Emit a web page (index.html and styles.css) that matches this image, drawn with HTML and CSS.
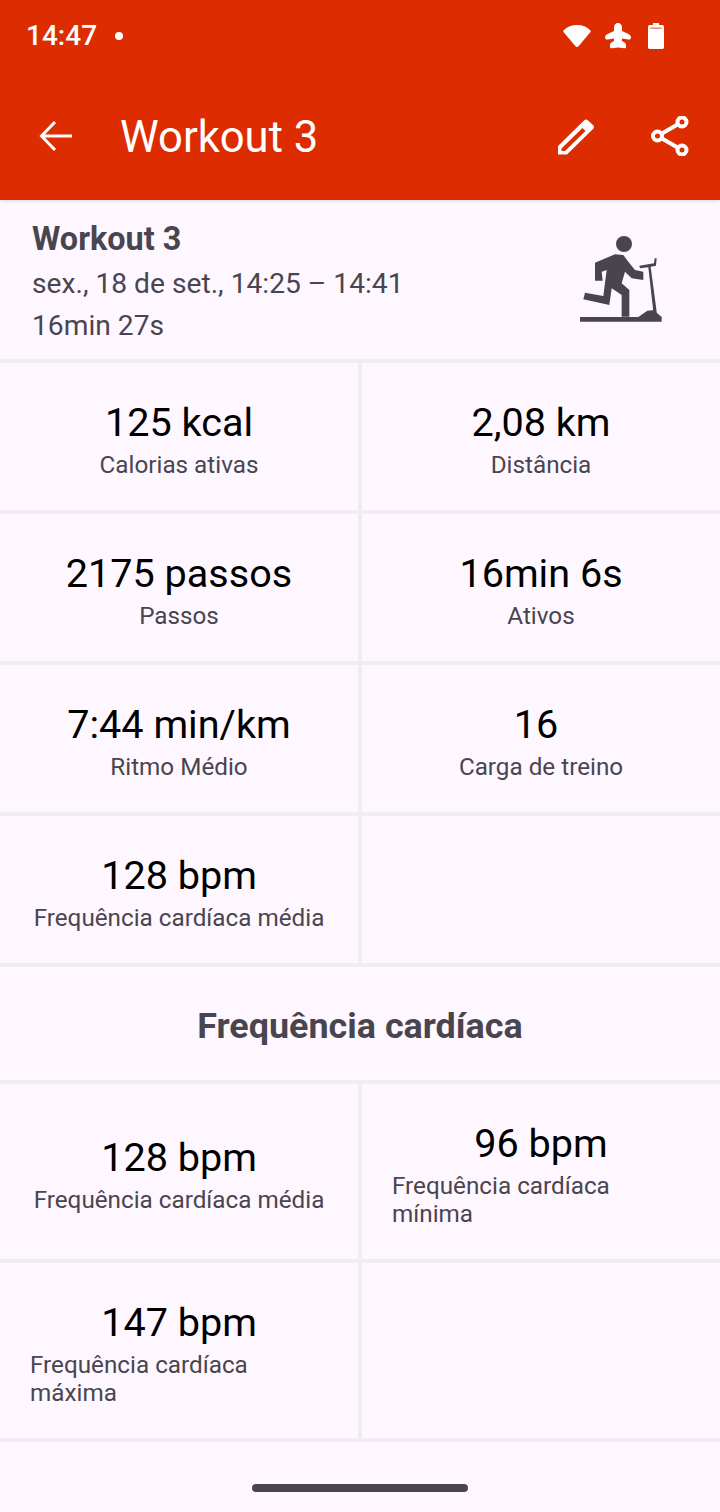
FILE: index.html
```html
<!DOCTYPE html>
<html lang="pt">
<head>
<meta charset="utf-8">
<title>Workout 3</title>
<link rel="stylesheet" href="styles.css">
</head>
<body>
<header class="top">
  <div class="status">
    <span class="clock">14:47</span>
    <span class="dot"></span>
    <span class="spacer"></span>
    <svg class="st st-wifi" viewBox="0 0 28 24"><path fill="#fff" d="M0.500 6.500C4 2.800 8.800 1 14 1s10 1.800 13.500 5.500c.4.400.4 1 0 1.400L15.500 22.300c-.8.900-2.200.900-3 0L.5 7.900c-.4-.4-.4-1 0-1.400z"/></svg>
    <svg class="st st-plane" viewBox="0 0 26 26"><path fill="#fff" d="M13 0c2.400 0 4 2 4 4.500V8l6.500 3c1.500.7 2.500 2 2.500 3.500 0 1.500-1.200 2.300-2.700 2L17 15.500V18l2.500 1.500c.9.500 1.500 1.300 1.500 2.500v2c0 1-.8 1.500-1.700 1.200L13 24.500l-6.300.7C5.800 25.500 5 25 5 24v-2c0-1.200.6-2 1.500-2.500L9 18v-2.500L2.700 16.500c-1.500.3-2.700-.5-2.700-2C0 13 1 11.700 2.500 11L9 8V4.500C9 2 10.600 0 13 0z"/></svg>
    <svg class="st st-batt" viewBox="0 0 16 26"><path fill="#fff" d="M5 0h6v2h3.200c1 0 1.800.8 1.800 1.800v20.400c0 1-.8 1.800-1.800 1.800H1.800C.8 26 0 25.200 0 24.200V3.800C0 2.800.8 2 1.800 2H5z"/><rect x="2.500" y="4.500" width="11" height="1.400" fill="#dd2c00" opacity=".65"/></svg>
  </div>
  <div class="bar">
    <svg class="ic-back" viewBox="0 0 34 32"><path fill="none" stroke="#fff" stroke-width="3" d="M33 16H3.500M16 2 2.500 16 16 30"/></svg>
    <h1 class="title">Workout 3</h1>
    <svg class="ic-edit" viewBox="550 110 50 50"><path fill="#fff" fill-rule="evenodd" d="M558 153.500V145L584 119.500q2-2 4 0L593 124q2 2 0 4L567 153.500zM561.500 147.500V150H565L585.500 130 582.500 127z"/></svg>
    <svg class="ic-share" viewBox="0 0 38 40"><g fill="none" stroke="#fff" stroke-width="4"><circle cx="6.500" cy="20" r="4.500"/><circle cx="31" cy="6" r="4.500"/><circle cx="31" cy="34" r="4.500"/><path d="M10.500 17.700 27 8.300M10.500 22.300 27 31.700"/></g></svg>
  </div>
</header>
<main>
  <section class="summary">
    <div class="summary-text">
      <p class="s-title">Workout 3</p>
      <p class="s-line s-first">sex., 18 de set., 14:25 – 14:41</p>
      <p class="s-line">16min 27s</p>
    </div>
    <svg class="ic-tread" viewBox="0 0 360 360"><g fill="#49454f"><circle cx="192" cy="72" r="24"/><path d="M105 128 165 103 190 105 205 125 225 150 250 155 250 180 215 175 195 155 185 190 208 210 208 290 185 290 185 225 155 205 148 255 70 238 75 218 130 228 140 150 125 155 128 182 105 182z"/><path d="M60 291H235L262 272 285 270 292 280 305 291V305H60z"/><path d="M238 137 282 130 284 115 290 115 288 137 272 140 290 275 280 275 265 142 240 145z"/></g></svg>
  </section>
  <section class="grid">
    <div class="cell"><div class="val">125 kcal</div><div class="lab">Calorias ativas</div></div>
    <div class="cell"><div class="val">2,08 km</div><div class="lab">Distância</div></div>
    <div class="cell"><div class="val">2175 passos</div><div class="lab">Passos</div></div>
    <div class="cell"><div class="val">16min 6s</div><div class="lab">Ativos</div></div>
    <div class="cell"><div class="val">7:44 min/km</div><div class="lab">Ritmo Médio</div></div>
    <div class="cell"><div class="val val-nudge">16</div><div class="lab">Carga de treino</div></div>
    <div class="cell"><div class="val">128 bpm</div><div class="lab">Frequência cardíaca média</div></div>
    <div class="cell"></div>
  </section>
  <h2 class="heading">Frequência cardíaca</h2>
  <section class="grid grid-tall">
    <div class="cell"><div class="val">128 bpm</div><div class="lab">Frequência cardíaca média</div></div>
    <div class="cell cell-wrap"><div class="val">96 bpm</div><div class="lab">Frequência cardíaca<br>mínima</div></div>
    <div class="cell cell-wrap"><div class="val">147 bpm</div><div class="lab">Frequência cardíaca<br>máxima</div></div>
    <div class="cell"></div>
  </section>
</main>
<div class="home"></div>
</body>
</html>
```
FILE: styles.css
```css
* { box-sizing: border-box; }
html, body { margin: 0; padding: 0; }
body {
  width: 720px;
  height: 1512px;
  position: relative;
  overflow: hidden;
  background: #fef7ff;
  font-family: Roboto, sans-serif;
  color: #000;
}
p, h1, h2 { margin: 0; font-weight: 400; }

.top { height: 200px; background: #dd2c00; color: #fff; box-shadow: 0 1px 4px rgba(0, 0, 0, .12); }
.status { height: 72px; display: flex; align-items: center; padding: 0 0 0 26px; }
.clock { font-size: 28px; font-weight: 500; line-height: 72px; }
.dot { width: 8px; height: 8px; border-radius: 50%; background: #fff; margin-left: 18px; }
.spacer { flex: 1; }
.st { display: block; flex: none; }
.st-wifi { width: 28px; height: 24px; margin-right: 14px; }
.st-plane { width: 26px; height: 26px; margin-right: 17px; }
.st-batt { width: 16px; height: 26px; margin-right: 56px; }

.bar { height: 128px; display: flex; align-items: center; }
.ic-back { width: 34px; height: 32px; margin-left: 39px; flex: none; }
.title { font-size: 43.6px; line-height: 124px; padding-top: 4px; margin-left: 47px; flex: 1; }
.ic-edit { width: 50px; height: 50px; margin-right: 51px; margin-top: -1px; flex: none; }
.ic-share { width: 38px; height: 40px; margin-right: 31px; flex: none; }

.summary { height: 163px; padding: 18px 0 0 32px; display: flex; border-bottom: 4px solid #f1ecf1; }
.summary-text { flex: 1; }
.s-title { font-size: 32.4px; font-weight: 700; line-height: 42px; color: #49454f; }
.s-line { font-size: 28.2px; line-height: 42px; color: #49454f; }
.s-first { margin-top: 3px; }
.ic-tread { width: 120px; height: 120px; margin: 2px 40px 0 0; flex: none; }

.grid { display: grid; grid-template-columns: 362px 358px; }
.cell { height: 151px; border-bottom: 4px solid #f1ecf1; text-align: center; padding-top: 36px; }
.cell:nth-child(odd) { border-right: 4px solid #f1ecf1; }
.val { font-size: 39.6px; line-height: 48px; }
.val-nudge { padding-right: 10px; }
.lab { font-size: 24.25px; line-height: 28px; color: #49454f; margin-top: 4px; }

.heading { height: 117px; border-bottom: 4px solid #f1ecf1; text-align: center; font-size: 35.9px; font-weight: 700; line-height: 119px; color: #49454f; }

.grid-tall .cell { height: 179px; padding-top: 50px; }
.grid-tall .cell-wrap { padding-top: 36px; }
.cell-wrap .lab { text-align: left; padding-left: 30px; }

.home { position: absolute; left: 252px; top: 1484px; width: 216px; height: 8px; border-radius: 4px; background: #49454f; }
```
